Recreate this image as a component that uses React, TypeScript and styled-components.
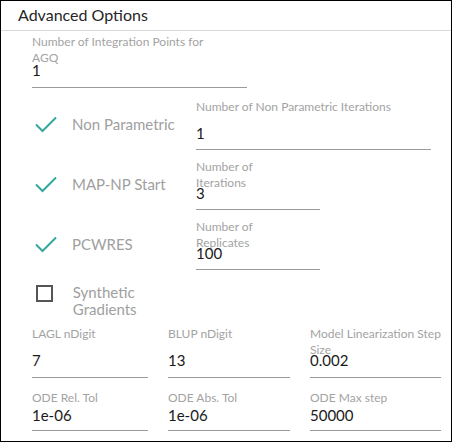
import React from 'react';
import styled, { createGlobalStyle } from 'styled-components';

const GlobalStyle = createGlobalStyle`
	html, body {
		margin: 0;
		padding: 0;
		background: #ffffff;
	}
	body {
		font-family: Lato, 'Open Sans', sans-serif;
	}
`;

interface FieldProps {
	label: string;
	value: string;
	width: number;
	labelWidth?: number;
	labelHeight?: number;
	bottomSpace?: number;
}

function Field({ label, value, width, labelWidth, labelHeight = 24, bottomSpace = 6 }: FieldProps) {
	return (
		<StyledField $width={width}>
			<FieldLabel $height={labelHeight} $width={labelWidth ?? width}>
				{label}
			</FieldLabel>
			<FieldValue $bottom={bottomSpace}>{value}</FieldValue>
		</StyledField>
	);
}

function CheckMark() {
	return (
		<svg width="22" height="17" viewBox="0 0 22 17">
			<polyline points="1,8.5 7.5,15 21,1.5" fill="none" stroke="#33a89d" strokeWidth="2" />
		</svg>
	);
}

interface CheckProps {
	label: string;
	checked: boolean;
}

function CheckItem({ label, checked }: CheckProps) {
	return (
		<StyledCheck $checked={checked}>
			<div className="box">{checked ? <CheckMark /> : <EmptyBox />}</div>
			<CheckText>{label}</CheckText>
		</StyledCheck>
	);
}

export default function App() {
	return (
		<>
			<GlobalStyle />
			<Frame>
				<Header>Advanced Options</Header>
				<Body>
					<Field
						label="Number of Integration Points for AGQ"
						value="1"
						width={215}
						labelWidth={180}
						labelHeight={26}
						bottomSpace={7}
					/>

					<OptionRows>
						<OptionRow>
							<CheckItem label="Non Parametric" checked />
							<Field label="Number of Non Parametric Iterations" value="1" width={235} />
						</OptionRow>
						<OptionRow>
							<CheckItem label="MAP-NP Start" checked />
							<Field label="Number of Iterations" value="3" width={124} labelWidth={95} />
						</OptionRow>
						<OptionRow>
							<CheckItem label="PCWRES" checked />
							<Field label="Number of Replicates" value="100" width={124} labelWidth={95} />
						</OptionRow>
					</OptionRows>

					<SyntheticRow>
						<CheckItem label="Synthetic Gradients" checked={false} />
					</SyntheticRow>

					<Grid>
						<Field label="LAGL nDigit" value="7" width={116} bottomSpace={7} />
						<Field label="BLUP nDigit" value="13" width={122} bottomSpace={7} />
						<Field label="Model Linearization Step Size" value="0.002" width={131} bottomSpace={7} />
						<Field label="ODE Rel. Tol" value="1e-06" width={116} labelHeight={15} bottomSpace={5} />
						<Field label="ODE Abs. Tol" value="1e-06" width={122} labelHeight={15} bottomSpace={5} />
						<Field label="ODE Max step" value="50000" width={131} labelHeight={15} bottomSpace={5} />
					</Grid>
				</Body>
			</Frame>
		</>
	);
}

const Frame = styled.div`
	box-sizing: border-box;
	width: 452px;
	height: 442px;
	border: 1px solid #000000;
	background: #ffffff;
	overflow: hidden;
`;

const Header = styled.div`
	box-sizing: border-box;
	height: 30px;
	padding: 4px 0 0 17px;
	border-bottom: 1px solid #dadada;
	font-size: 16px;
	line-height: 20px;
	color: #262626;
`;

const Body = styled.div`
	display: flex;
	flex-direction: column;
	padding: 3px 0 0 31px;
`;

const StyledField = styled.div<{ $width: number }>`
	width: ${({ $width }) => $width}px;
	display: flex;
	flex-direction: column;
	border-bottom: 1px solid #9a9a9a;
`;

const FieldLabel = styled.div<{ $height: number; $width: number }>`
	width: ${({ $width }) => $width}px;
	height: ${({ $height }) => $height}px;
	font-size: 12px;
	line-height: 16px;
	color: #a3a3a3;
	overflow: visible;
`;

const FieldValue = styled.div<{ $bottom: number }>`
	font-size: 15px;
	line-height: 20px;
	color: #1a1a1a;
	padding-bottom: ${({ $bottom }) => $bottom}px;
`;

const OptionRows = styled.div`
	display: flex;
	flex-direction: column;
	gap: 9px;
	margin-top: 11px;
`;

const OptionRow = styled.div`
	display: flex;
	align-items: center;
`;

const StyledCheck = styled.div<{ $checked: boolean }>`
	width: 164px;
	display: flex;
	align-items: ${({ $checked }) => ($checked ? 'center' : 'flex-start')};

	.box {
		width: 22px;
		margin-left: ${({ $checked }) => ($checked ? '3px' : '4px')};
		margin-right: 15px;
		display: flex;
		padding-top: ${({ $checked }) => ($checked ? '0' : '1px')};
	}
`;

const EmptyBox = styled.span`
	display: block;
	box-sizing: border-box;
	width: 17px;
	height: 17px;
	border: 2px solid #555555;
`;

const CheckText = styled.div`
	width: 124px;
	font-size: 15px;
	line-height: 17px;
	color: #a0a0a0;
`;

const SyntheticRow = styled.div`
	margin-top: 14px;
	display: flex;
`;

const Grid = styled.div`
	margin-top: 8px;
	display: grid;
	grid-template-columns: 116px 122px 131px;
	column-gap: 20px;
	row-gap: 12px;
`;
